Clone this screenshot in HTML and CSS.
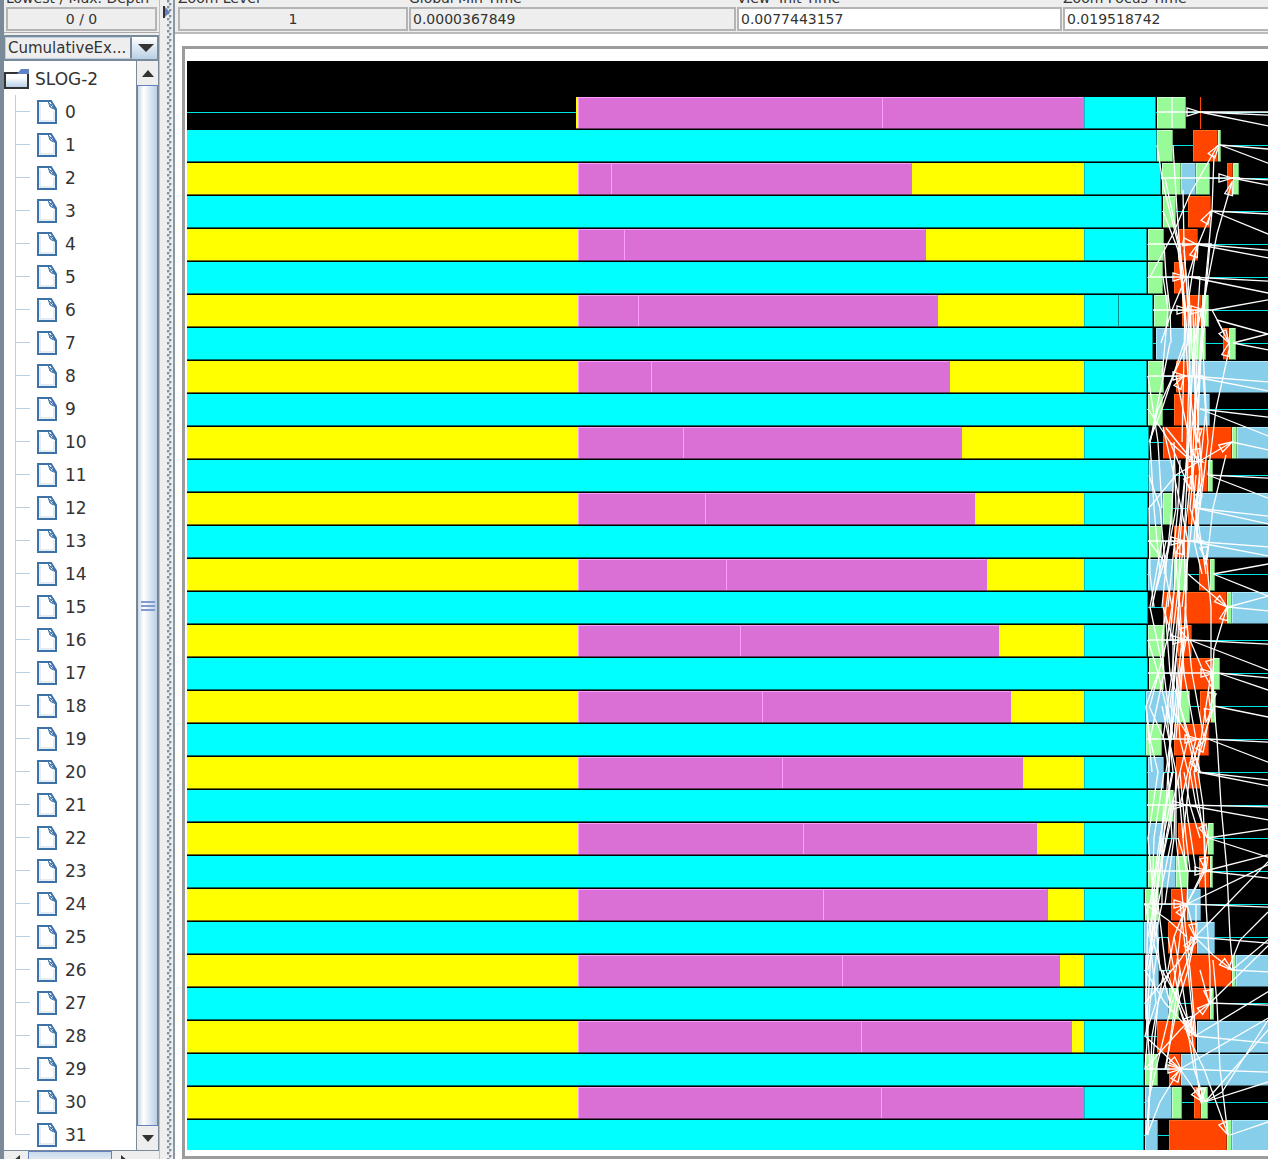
FILE: index.html
```html
<!DOCTYPE html>
<html lang="en">
<head>
<meta charset="utf-8">
<title>SLOG-2 Timeline</title>
<link rel="stylesheet" href="styles.css">
</head>
<body>
<svg class="symbols" aria-hidden="true">
  <symbol id="leaf" viewBox="0 0 20 24">
    <path d="M1 1h13l5 8v14H1z" fill="#fff" stroke="#3d72a8" stroke-width="2"/>
    <path d="M3 21V3M3 21h14V11" fill="none" stroke="#c9daec"/>
    <path d="M11 1l2 6 6 3M12 3l6 6M15 4l-2 3M17 6l-2 3" fill="none" stroke="#3d72a8"/>
  </symbol>
</svg>
<aside class="sidebar">
  <div class="depth">
    <label class="caption" for="depth"><span>Lowest / Max. Depth</span></label>
    <input class="field center" id="depth" value="0 / 0" readonly>
  </div>
  <div class="combo">
    <select aria-label="Coloring"><option>CumulativeEx...</option></select>
    <svg class="combo-arrow" width="16" height="8" aria-hidden="true"><path d="M0 0h16L8 8z" fill="#333"/></svg>
  </div>
  <div class="pane">
    <div class="tree">
      <div class="root">
        <svg width="25" height="20" aria-hidden="true">
          <defs><linearGradient id="folder" x1="0" y1="0" x2="0" y2="1"><stop offset=".3" stop-color="#fff"/><stop offset="1" stop-color="#afcbe6"/></linearGradient></defs>
          <path d="M1 4h23v15H1z" fill="url(#folder)" stroke="#333" stroke-width="2"/>
          <path d="M13 5l4-5h8v5z" fill="#5f83c4"/>
        </svg>
        <span>SLOG-2</span>
      </div>
      <ul class="leaves" id="leaves"></ul>
    </div>
    <div class="vscroll">
      <button class="step" aria-label="Scroll up"><svg width="12" height="7"><path d="M0 7L6 0l6 7z" fill="#333"/></svg></button>
      <div class="thumb"><i></i><i></i><i></i></div>
      <button class="step" aria-label="Scroll down"><svg width="12" height="7"><path d="M0 0h12L6 7z" fill="#333"/></svg></button>
    </div>
  </div>
  <div class="hscroll">
    <button class="hstep" aria-label="Scroll left"><svg width="7" height="12"><path d="M7 0v12L0 6z" fill="#333"/></svg></button>
    <div class="hthumb"></div>
    <button class="hstep" aria-label="Scroll right"><svg width="7" height="12"><path d="M0 0v12l7-6z" fill="#333"/></svg></button>
  </div>
</aside>
<div class="divider">
  <svg width="8" height="12" aria-hidden="true"><path d="M1 0l6 6-6 6z" fill="#6382bf"/><path d="M1 0v12" stroke="#333" stroke-width="2"/></svg>
</div>
<main class="main">
  <div class="toolbar">
    <div class="cell"><label class="caption" for="zoom"><span>Zoom Level</span></label><input class="field center" id="zoom" value="1" readonly></div>
    <div class="cell"><label class="caption" for="gmin"><span>Global Min Time</span></label><input class="field" id="gmin" value="0.0000367849" readonly></div>
    <div class="cell"><label class="caption" for="vinit"><span>View&nbsp; Init Time</span></label><input class="field edit" id="vinit" value="0.0077443157"></div>
    <div class="cell"><label class="caption" for="focus"><span>Zoom Focus Time</span></label><input class="field edit" id="focus" value="0.019518742"></div>
  </div>
  <div class="frame"><svg class="canvas" id="canvas" role="img" aria-label="Process timelines"></svg></div>
</main>
<script src="timeline.js"></script>
</body>
</html>
```
FILE: styles.css
```css
* { box-sizing: border-box; }

body {
  margin: 0;
  height: 100vh;
  display: flex;
  overflow: hidden;
  background: #fff;
  color: #333;
  font: 14px "DejaVu Sans", sans-serif;
}

.symbols { position: absolute; width: 0; height: 0; }

.sidebar {
  flex: none;
  width: 160px;
  display: flex;
  flex-direction: column;
  background: #eee;
  border-left: 4px solid #7a8a99;
  border-right: 1px solid #b8c0c8;
}

.depth { padding: 0 2px 1px; border-bottom: 1px solid #aaa; }

.caption {
  display: flex;
  align-items: flex-end;
  height: 7px;
  overflow: hidden;
  white-space: nowrap;
  line-height: 17px;
}

.field {
  display: block;
  width: 100%;
  height: 24px;
  padding: 0 2px;
  border: 2px solid #b4b4b4;
  border-radius: 0;
  background: #eee;
  color: #333;
  font: inherit;
  outline: 0;
}
.field.center { text-align: center; }
.field.edit { background: #fff; }

.combo {
  display: flex;
  align-items: center;
  height: 26px;
  margin-top: 2px;
  border: 2px solid #7a8a99;
  border-left-width: 1px;
  background: linear-gradient(#fff, #b8cfe5) right / 27px 100% no-repeat #eee;
}
.combo select {
  width: 127px;
  height: 22px;
  padding: 0 2px;
  border: 1px solid #b8cfe5;
  border-right: 2px solid #7a8a99;
  border-radius: 0;
  appearance: none;
  background: #eee;
  color: #333;
  font: inherit;
  font-size: 15px;
  outline: 0;
}
.combo-arrow { margin-left: 6px; }

.pane {
  flex: 1;
  min-height: 0;
  display: flex;
  overflow: hidden;
  background: #fff;
  border-bottom: 1px solid #7a8a99;
}
.tree { flex: 1; font-size: 17px; padding-top: 1px; }
.root { display: flex; align-items: center; gap: 6px; height: 33px; }
.leaves {
  margin: 0;
  padding: 0 0 0 11px;
  list-style: none;
}
.leaves li {
  display: flex;
  align-items: center;
  height: 33px;
  background:
    linear-gradient(#b8cfe5, #b8cfe5) 0 16px / 15px 1px no-repeat,
    linear-gradient(#b8cfe5, #b8cfe5) 0 0 / 1px 100% no-repeat;
}
.leaves li:last-child {
  background:
    linear-gradient(#b8cfe5, #b8cfe5) 0 16px / 15px 1px no-repeat,
    linear-gradient(#b8cfe5, #b8cfe5) 0 0 / 1px 16px no-repeat;
}
.leaves svg { width: 20px; height: 24px; margin: 0 8px 0 22px; }

.vscroll {
  flex: none;
  width: 23px;
  display: flex;
  flex-direction: column;
  border-left: 1px solid #7a8a99;
  border-right: 1px solid #7a8a99;
}
.step {
  display: grid;
  place-items: center;
  height: 24px;
  padding: 0;
  border: 0;
  background: #eee;
}
.thumb {
  flex: 1;
  display: flex;
  flex-direction: column;
  align-items: center;
  justify-content: center;
  gap: 2px;
  border: 1px solid #6382bf;
  background: linear-gradient(90deg, #c8daeb, #fff 30%, #b8cfe5);
}
.thumb i { width: 14px; height: 2px; background: #7f9bd0; }

.hscroll { flex: none; height: 8px; display: flex; overflow: hidden; padding-right: 23px; }
.hstep {
  width: 24px;
  height: 20px;
  padding: 0;
  border: 0;
  display: grid;
  place-items: center;
  background: #eee;
}
.hthumb { flex: 1; height: 20px; border: 1px solid #6382bf; background: linear-gradient(#c8daeb, #fff); }

.divider {
  flex: none;
  width: 15px;
  padding-top: 6px;
  padding-left: 3px;
  border-right: 2px solid #8a97a4;
  background:
    linear-gradient(90deg, #eee 6px, transparent 6px 12px, #eee 12px),
    radial-gradient(circle at 1px 1px, #8492a0 1px, transparent 2px) 7px 0 / 8px 6px,
    radial-gradient(circle at 1px 1px, #8492a0 1px, transparent 2px) 9px 3px / 8px 6px,
    #eee;
}
.divider svg { display: block; }

.main {
  flex: 1;
  min-width: 0;
  display: flex;
  flex-direction: column;
}
.toolbar {
  display: grid;
  grid-template-columns: 230px 327px 325px minmax(203px, 1fr);
  gap: 1px;
  padding: 0 0 1px 3px;
  background: #eee;
  border-bottom: 2px solid #bbb;
  overflow: hidden;
}
.cell:last-child { margin-right: -4px; }

.frame {
  flex: 1;
  min-height: 0;
  display: flex;
  margin: 12px 0 0 7px;
  padding: 12px 0 6px 2px;
  border: 3px solid #9c9c9c;
  border-right: 0;
}
.canvas { flex: 1; min-width: 0; background: #000; shape-rendering: crispEdges; }

.link { fill: none; stroke: #fff; stroke-width: 1.3; shape-rendering: auto; }
.axis { stroke: #00e4e4; stroke-width: 1; }
```
FILE: timeline.js
```js
const NS = 'http://www.w3.org/2000/svg';
const canvas = document.getElementById('canvas');
const leaves = document.getElementById('leaves');

// Horizontal and vertical scroll of the view.
const VIEW_X = 187, VIEW_Y = 61;
const ROW = 33, BAR = 32, FIRST = 97;
const END = 4000;

// state: [fill, light edge, dark edge at the bottom, dark edge at the right]
const STATES = {
  c: ['#00ffff', '#00ffff', '#006b6b', '#008b8b'],
  y: ['#ffff00', '#ffff00', '#6b6b00', '#ffff00'],
  p: ['#da70d6', '#ff9dff', '#6c386a', '#da70d6'],
  g: ['#98fb98', '#c8ffc8', '#4c7d4c', '#6aaf6a'],
  b: ['#87ceeb', '#aeeaff', '#436775', '#5e90a4'],
  o: ['#ff4500', '#ff6a20', '#802200', '#b23000']
};

// End of the last plum state and the split inside it, for even ranks.
const PLUM = [[1084, 882], [912, 611], [926, 624], [938, 638], [950, 651], [962, 683], [975, 705], [987, 726],
  [999, 740], [1011, 762], [1023, 782], [1037, 803], [1048, 823], [1060, 842], [1072, 861], [1084, 881]];

// End of the cyan state, then the states that follow: name, start, end.
const TAIL = [
  '1156 g1157-1186 o1200-1201', '1157 g1157-1173 o1193-1218 g1218-1221',
  '1161 g1162-1181 b1181-1196 g1196-1210 o1227-1233 g1233-1239', '1162 g1163-1176 o1188-1211',
  '1147 g1148-1164 o1178-1198', '1147 g1148-1163 o1174-1186',
  '1153 g1154-1169 o1182-1202 g1202-1209', '1153 b1156-1189 g1189-1206 o1223-1229 g1229-1236',
  '1147 g1148-1164 o1176-1190 b1190-', '1147 g1148-1163 o1174-1198 b1198-1210',
  '1149 o1163-1232 g1232-1237 b1237-', '1149 b1149-1174 o1187-1208 g1208-1213',
  '1148 b1149-1163 g1163-1173 o1188-1196 b1196-', '1148 g1149-1162 o1174-1188 b1188-',
  '1147 b1148-1174 g1174-1188 o1199-1210 g1210-1215', '1148 o1163-1227 g1227-1232 b1232-',
  '1147 g1148-1165 o1178-1192', '1148 g1149-1164 o1177-1213 g1213-1220',
  '1146 b1146-1178 g1178-1190 o1200-1211 g1211-1216', '1146 g1146-1162 o1174-1209',
  '1147 b1148-1164 o1176-1200', '1147 g1148-1174 o1187-1188',
  '1147 b1148-1164 o1178-1208 g1208-1214', '1147 g1148-1162 b1162-1176 g1176-1188 o1199-1210 g1210-1213',
  '1144 g1145-1159 o1171-1187 b1187-1201', '1144 b1144-1159 o1168-1197 b1197-1215',
  '1144 b1145-1159 o1170-1232 g1232-1236 b1236-', '1144 b1145-1169 g1169-1179 o1192-1210 g1210-1214',
  '1144 o1157-1196 b1197-', '1144 g1145-1158 o1169-1181 b1181-',
  '1144 b1145-1172 g1172-1182 o1194-1201 g1201-1208', '1144 b1145-1158 o1169-1227 g1227-1232 b1232-'
];

// Messages leaving to the right: start x, then the y values reached at x = 1268.
const OUT = [[1200, 115, 126], [1220, 149, 163], [1232, 180, 185], [1212, 214, 234], [1195, 250, 258],
  [1190, 281, 293], [1212, 300], [1233, 334, 350], [1190, 382, 391], [1200, 417, 436], [1232, 450],
  [1208, 478, 498], [1196, 516, 524], [1190, 547, 556], [1213, 564, 596], [1228, 596, 611], [1190, 644, 670],
  [1218, 678, 690], [1214, 717], [1208, 742, 762], [1198, 780, 786], [1186, 807, 820], [1208, 829, 857],
  [1205, 855, 878], [1187, 865, 907], [1195, 862, 943], [1232, 940, 972], [1210, 946, 1005],
  [1195, 992, 1043], [1180, 1018, 1072], [1205, 1030, 1082], [1230, 1122]];

// Messages between ranks, as point lists.
const LINKS = [
  '1157,145 1163,184 1178,244 1184,310', '1173,145 1177,211 1182,277 1188,343', '1165,178 1179,244 1184,277',
  '1218,145 1190,194 1173,234 1150,277', '1163,211 1178,250 1186,310', '1183,190 1184,244 1188,310',
  '1212,211 1196,250 1187,310', '1214,155 1212,211 1206,277 1198,376', '1232,182 1217,234 1206,290 1194,343',
  '1210,244 1204,310 1197,409', '1164,244 1166,277 1170,310 1171,343', '1186,277 1172,310 1161,343',
  '1163,277 1168,310 1162,376', '1198,244 1188,277 1192,343', '1180,244 1188,376', '1184,250 1194,376',
  '1200,277 1194,376', '1206,310 1199,376 1190,442', '1217,320 1229,343', '1217,320 1268,334', '1212,310 1224,333',
  '1229,350 1216,409 1208,475', '1148,376 1158,442 1162,508', '1148,409 1170,442 1190,460',
  '1188,343 1158,409 1150,442', '1184,343 1162,409 1149,442', '1170,343 1150,442', '1185,310 1182,442',
  '1188,310 1192,475', '1191,310 1186,475', '1193,310 1196,442 1190,508', '1196,310 1188,442 1180,541',
  '1199,310 1192,475', '1201,310 1206,409 1196,508', '1203,310 1197,442', '1176,376 1190,442 1198,541',
  '1188,376 1200,475', '1203,376 1208,442 1200,508', '1192,376 1184,541', '1195,376 1202,475 1196,541',
  '1163,427 1174,475 1188,541', '1166,428 1192,460', '1170,442 1190,490', '1150,442 1154,508 1160,574',
  '1174,442 1176,508 1164,574', '1226,455 1213,508 1207,560', '1232,442 1210,455 1176,475 1149,508',
  '1149,475 1160,508 1166,574', '1174,460 1172,508 1162,607', '1180,460 1178,508 1168,607', '1185,475 1178,541 1170,640',
  '1191,475 1184,541 1172,640', '1196,475 1190,541 1182,607', '1200,475 1194,541 1202,574', '1204,475 1194,508',
  '1196,508 1206,574', '1190,508 1200,541 1206,565', '1149,508 1150,574 1154,607', '1149,541 1163,560 1172,607',
  '1174,541 1180,607 1184,673', '1180,541 1178,640 1170,706', '1188,541 1184,640 1176,739', '1184,541 1186,607 1180,706',
  '1162,541 1150,607', '1166,541 1152,607', '1170,541 1156,590', '1188,574 1209,592 1227,607',
  '1206,555 1211,607 1211,673 1217,739 1221,805 1227,871 1230,937 1233,970', '1227,607 1214,650 1211,706 1205,739',
  '1163,607 1173,640 1173,706', '1168,592 1162,640 1164,673', '1174,592 1167,640 1150,706', '1180,592 1172,673 1163,739',
  '1150,607 1164,673 1172,739', '1148,640 1158,673 1174,739', '1165,607 1170,673 1190,739', '1178,607 1184,673 1196,739',
  '1185,607 1192,673 1204,739', '1190,640 1204,673 1213,690', '1186,640 1180,673 1174,739', '1182,640 1175,706 1166,772',
  '1178,640 1172,706 1169,772', '1164,673 1150,739', '1158,673 1146,706 1150,739', '1149,706 1164,739 1169,772',
  '1146,706 1152,772', '1176,673 1180,739 1188,772', '1211,673 1206,706 1196,772', '1213,673 1214,706 1203,739',
  '1170,706 1190,739 1200,772', '1180,706 1196,772', '1174,706 1168,772 1172,838',
  '1166,706 1173,772 1160,838', '1162,706 1176,772 1176,838', '1196,739 1180,805', '1188,739 1172,805 1160,871',
  '1200,739 1190,772 1183,838', '1204,739 1194,772 1204,838', '1150,739 1158,772 1148,838', '1164,772 1154,838 1152,904',
  '1168,772 1164,838 1156,904', '1172,772 1160,838 1150,904', '1176,772 1174,838 1165,904', '1180,772 1186,838 1190,871',
  '1184,772 1190,805 1200,838', '1190,772 1196,805 1207,838', '1198,772 1203,805 1206,871', '1178,780 1183,838 1186,871',
  '1174,805 1160,871 1148,937', '1170,805 1156,871 1150,937', '1164,805 1158,871 1154,937', '1186,805 1196,871',
  '1208,838 1203,871 1187,904', '1204,838 1206,904 1210,970', '1148,838 1154,904 1160,970', '1176,838 1183,904 1190,970',
  '1178,838 1188,871 1187,904', '1162,838 1162,904 1148,970', '1172,838 1158,904 1146,970',
  '1205,871 1187,904 1174,937 1168,970', '1145,904 1168,920 1187,937', '1145,904 1152,937 1170,1003',
  '1187,904 1195,937', '1180,904 1188,970 1194,1030', '1184,904 1176,970 1170,1003', '1196,904 1196,937 1184,970',
  '1195,937 1180,960 1145,1003', '1195,937 1188,970 1178,1003 1165,1069', '1195,937 1213,955 1232,970',
  '1174,937 1180,970 1190,1036', '1168,937 1174,970 1180,1003', '1159,937 1150,1003 1145,1069', '1148,904 1146,1003 1150,1069',
  '1154,904 1150,970 1146,1036', '1158,904 1166,970 1190,1036', '1150,937 1156,1003 1145,1036', '1210,970 1210,1003',
  '1200,970 1209,1003', '1213,960 1217,1003 1220,1069 1228,1135', '1190,970 1196,1036',
  '1180,970 1166,1069', '1184,970 1172,1003 1148,1102', '1170,970 1158,1003 1146,1135', '1164,970 1152,1036 1148,1135',
  '1145,970 1165,1003 1195,1036', '1145,1036 1160,1050 1180,1069', '1195,1036 1180,1003 1162,970',
  '1210,1003 1195,1015 1180,1030 1145,1069', '1180,1069 1160,1102 1147,1135', '1180,1069 1200,1098',
  '1190,1020 1196,1069 1201,1102', '1186,1020 1194,1069 1205,1102',
  '1178,1003 1188,1036 1204,1069 1216,1102 1228,1135',
  '1228,970 1240,940 1268,912', '1205,1102 1222,1092 1268,1020',
  '1157,112 1268,112', '1172,97 1172,128', '1161,178 1240,178', '1148,244 1212,244', '1148,277 1200,277',
  '1153,310 1212,310', '1149,376 1203,376', '1148,541 1204,541', '1148,640 1190,640', '1148,673 1218,673',
  '1146,739 1208,739', '1147,805 1190,805', '1148,871 1210,871', '1144,904 1190,904', '1145,1069 1180,1069'
];

// Arrow heads: tip x, tip y, direction in degrees.
const HEADS = [[1200, 112, 0], [1219, 145, -55], [1232, 178, 0], [1232, 182, -75], [1211, 211, -60], [1196, 244, 10],
  [1198, 244, -70], [1186, 277, 0], [1190, 310, 0], [1204, 310, 0], [1229, 343, -75], [1229, 343, 60],
  [1186, 376, 0], [1184, 376, -60], [1232, 442, -30], [1203, 462, 20], [1198, 462, 80], [1196, 508, 100],
  [1192, 490, 70], [1184, 541, 0], [1182, 541, -80], [1206, 560, 80], [1227, 607, 40], [1227, 607, -75],
  [1186, 640, 0], [1188, 640, 70], [1214, 673, 0], [1213, 673, 75], [1210, 706, 100], [1206, 722, 100],
  [1206, 739, -60], [1198, 739, 0], [1200, 772, 60], [1186, 805, 0], [1208, 838, 65], [1208, 871, 0],
  [1206, 871, 80], [1187, 904, 0], [1187, 904, -55], [1195, 937, -55], [1195, 937, 80], [1232, 970, 40],
  [1210, 1003, 80], [1210, 1003, -40], [1196, 1036, 50], [1192, 1030, 70], [1181, 1069, 0], [1181, 1069, -60],
  [1181, 1069, 45], [1203, 1102, 50], [1201, 1102, 90], [1228, 1135, 65], [1188, 950, 120], [1198, 442, 90]];

function add(parent, name, attrs) {
  const el = document.createElementNS(NS, name);
  for (const key in attrs) el.setAttribute(key, attrs[key]);
  parent.appendChild(el);
  return el;
}

const scene = add(canvas, 'g', { transform: `translate(${-VIEW_X} ${-VIEW_Y})` });

function bar(state, x1, x2, y) {
  const [fill, light, bottom, right] = STATES[state];
  add(scene, 'rect', { x: x1, y, width: x2 - x1, height: BAR, fill });
  if (x2 - x1 < 2) return;
  add(scene, 'rect', { x: x1, y, width: x2 - x1, height: 1, fill: light });
  add(scene, 'rect', { x: x1, y, width: 1, height: BAR, fill: light });
  add(scene, 'rect', { x: x2 - 1, y, width: 1, height: BAR, fill: right });
  add(scene, 'rect', { x: x1, y: y + BAR - 1, width: x2 - x1, height: 1, fill: bottom });
}

TAIL.forEach((text, rank) => {
  const y = FIRST + rank * ROW;
  const mid = y + 15.5;
  const [cyanEnd, ...states] = text.split(' ');
  add(scene, 'line', { x1: VIEW_X, x2: END, y1: mid, y2: mid, class: 'axis' });
  if (rank % 2) {
    bar('c', VIEW_X, +cyanEnd, y);
  } else {
    const [plumEnd, split] = PLUM[rank / 2];
    bar('y', rank ? VIEW_X : 576, 578, y);
    bar('p', 578, plumEnd, y);
    add(scene, 'rect', { x: split, y, width: 1, height: BAR - 1, fill: '#ff9dff' });
    if (plumEnd < 1084) bar('y', plumEnd, 1084, y);
    bar('c', 1084, +cyanEnd, y);
    add(scene, 'rect', { x: 1084, y, width: 1, height: BAR - 1, fill: '#00c4c4' });
  }
  if (rank === 6) add(scene, 'rect', { x: 1118, y, width: 1, height: BAR, fill: '#008b8b' });
  for (const s of states) {
    const [from, to] = s.slice(1).split('-');
    bar(s[0], +from, to ? +to : END, y);
  }

  const item = document.createElement('li');
  item.innerHTML = '<svg aria-hidden="true"><use href="#leaf"/></svg>';
  item.append(String(rank));
  leaves.appendChild(item);
});

OUT.forEach(([x, ...ends], rank) => {
  const y = FIRST + rank * ROW + 15;
  for (const end of ends) {
    const slope = (end - y) / (1268 - x);
    add(scene, 'path', { class: 'link', d: `M${x} ${y}L1400 ${Math.round(y + slope * (1400 - x))}` });
  }
});
for (const points of LINKS) add(scene, 'polyline', { class: 'link', points });
for (const [x, y, angle] of HEADS) {
  add(scene, 'path', { class: 'link', d: 'M0 0L-13 -4V4Z', transform: `translate(${x} ${y}) rotate(${angle})` });
}
```
